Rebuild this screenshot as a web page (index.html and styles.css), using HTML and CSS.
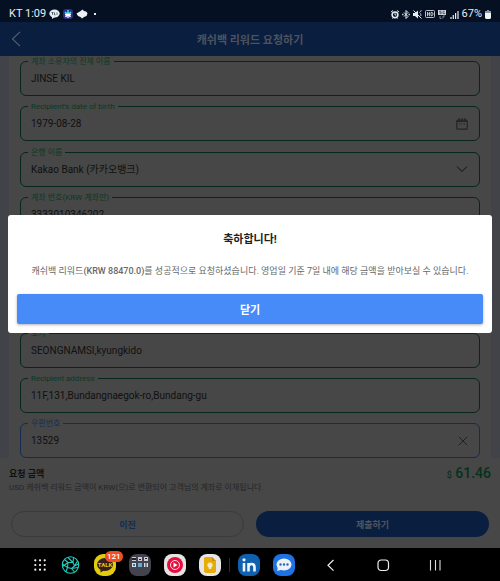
FILE: index.html
```html
<!DOCTYPE html>
<html lang="ko">
<head>
    <meta charset="UTF-8">
    <meta name="viewport" content="width=device-width, initial-scale=1.0">
    <title>캐쉬백 리워드 요청하기</title>
    <link rel="stylesheet" href="styles.css">
</head>
<body>
    <div class="screen">
        <div class="status-bar">
            <div class="status-left">
                <span>KT 1:09</span>
                <svg width="11" height="10" viewBox="0 0 11 10"><ellipse cx="5.5" cy="4.5" rx="5.2" ry="4" fill="#e8edf2"/><path d="M3 7v3l3-2z" fill="#e8edf2"/><path d="M2.5 3.5h2M3.5 3.5v2.3M5.5 3.5v2.3h1M8 3.5v2.3" stroke="#344052" stroke-width=".8" fill="none"/></svg>
                <svg width="10" height="10" viewBox="0 0 10 10"><rect width="10" height="10" rx="3" fill="#2c2e86"/><path d="M5 1v4M1.8 3.2L5 5l3.200-1.800" stroke="#48c9dc" stroke-width="1.6" fill="none"/><path d="M5 5v4M5 5L2.500 8M5 5l2.500 3M2 5.500h6" stroke="#fff" stroke-width="1.3"/></svg>
                <svg width="12" height="10" viewBox="0 0 12 10"><path d="M.5 4.500L3 3l1-.5L6.500.5 8 2c2 0 3 1 3.500 2.500L10.500 7 8 8 6 9.500 4.500 8 2 7z" fill="#eef2f5"/></svg>
                <span class="dot"></span>
            </div>
            <div class="status-right">
                <svg width="8" height="9" viewBox="0 0 8 9"><circle cx="4" cy="4.800" r="2.900" fill="none" stroke="#e8edf2" stroke-width="1.500"/><path d="M0 2l2-1.500M8 2L6 .5M1.500 8.500l1-1M6.500 8.500l-1-1M4 3.200V5h1.300" stroke="#e8edf2" fill="none"/></svg>
                <svg width="8" height="9" viewBox="0 0 8 9"><path d="M2 2.500l4 4-2 2v-8l2 2-4 4" stroke="#e8edf2" fill="none"/><path d="M.2 4.500h1.300M6.500 4.500h1.300" stroke="#e8edf2" stroke-width="1.300"/></svg>
                <svg width="9" height="9" viewBox="0 0 9 9"><path d="M0 3h2l3-2.500v8L2 6H0z" fill="#e8edf2"/><path d="M.5.5l8 8M6.500 2.500l1 1M7 5h1.500M7 1.500l1.500-.8" stroke="#e8edf2"/></svg>
                <svg width="10" height="9" viewBox="0 0 10 9"><rect x=".5" y=".5" width="9" height="7" rx="1" fill="none" stroke="#b8c0c9"/><path d="M2.500 2v4.200M4.400 2v4.200M2.500 4h2M6 2.400v3.300h1l.9-.8V3L7 2.400z" stroke="#e8edf2" stroke-width=".8" fill="none"/></svg>
                <svg width="9" height="9" viewBox="0 0 9 9"><rect width="8" height="5" fill="#d5dbe1"/><path d="M3.500 1H1.700v1.200h1.500v1.500H1.500M6.800 1.200H5v2.500h1.800V2.600" stroke="#26334a" stroke-width=".7" fill="none"/><path d="M2 6v2.500h1.500M5 8.500V6h2" stroke="#7f8997" fill="none"/></svg>
                <svg width="9" height="9" viewBox="0 0 9 9"><path d="M1 9V7M3.300 9V5M5.600 9V3M8 9V1" stroke="#e8edf2" stroke-width="1.200"/></svg>
                <span class="percent">67%</span>
                <svg width="6" height="9" viewBox="0 0 6 9"><path d="M0 1h2V0h2v1h2v2H0z" fill="#8c96a3"/><path d="M0 3h6v5L5 9H1L0 8z" fill="#f1f4f6"/></svg>
            </div>
        </div>

        <header class="header">
            <button class="back-btn" aria-label="뒤로">
                <svg width="10" height="16" viewBox="0 0 10 16"><path d="M9 .8L1.500 8 9 15.200" fill="none" stroke="#56606f" stroke-width="1.100"/></svg>
            </button>
            <h1>캐쉬백 리워드 요청하기</h1>
        </header>

        <main class="form-area">
            <form class="form-panel" id="cashback">
                <div class="field">
                    <label for="holder">계좌 소유자의 전체 이름</label>
                    <input type="text" id="holder" value="JINSE KIL">
                </div>
                <div class="field">
                    <label for="birth">Recipient's date of birth</label>
                    <input type="text" id="birth" value="1979-08-28">
                    <button type="button" class="field-icon" aria-label="날짜 선택">
                        <svg width="12" height="12" viewBox="0 0 12 12"><rect x=".8" y="2.200" width="10.400" height="9" rx="1" fill="none" stroke="#252529" stroke-width="1.200"/><path d="M1 3.500h10M3 0v3M6 0v3M9 0v3" stroke="#252529" stroke-width="1.200"/><path d="M3 6h1.200M5.400 6h1.200M7.800 6H9" stroke="#252529"/></svg>
                    </button>
                </div>
                <div class="field">
                    <label for="bank">은행 이름</label>
                    <select id="bank"><option>Kakao Bank (카카오뱅크)</option></select>
                    <svg class="field-icon arrow" width="12" height="12" viewBox="0 0 12 12"><path d="M1 3.500l5 5 5-5" fill="none" stroke="#101010"/></svg>
                </div>
                <div class="field">
                    <label for="account">계좌 번호(KRW 계좌만)</label>
                    <input type="text" id="account" value="3333010346202">
                </div>
                <div class="field"><input type="text" id="extra1"></div>
                <div class="field"><input type="text" id="extra2"></div>
                <div class="field">
                    <label for="city">도시</label>
                    <input type="text" id="city" value="SEONGNAMSI,kyungkido">
                </div>
                <div class="field">
                    <label for="address">Recipient address</label>
                    <input type="text" id="address" value="11F,131,Bundangnaegok-ro,Bundang-gu">
                </div>
                <div class="field active">
                    <label for="zip">우편번호</label>
                    <input type="text" id="zip" value="13529">
                    <button type="button" class="field-icon" aria-label="지우기">
                        <svg width="10" height="10" viewBox="0 0 10 10"><path d="M.8.8l8.400 8.400M9.200.8L.8 9.200" stroke="#1c1c1c" stroke-width=".9"/></svg>
                    </button>
                </div>
            </form>
        </main>

        <footer class="summary">
            <div class="summary-row">
                <h2>요청 금액</h2>
                <div class="amount"><small>$</small> 61.46</div>
            </div>
            <p>USD 캐쉬백 리워드 금액이 KRW(으)로 변환되어 고객님의 계좌로 이체됩니다.</p>
            <div class="actions">
                <button type="button" class="prev">이전</button>
                <button type="submit" form="cashback" class="submit">제출하기</button>
            </div>
        </footer>

        <!-- 완료 팝업 -->
        <div class="modal">
            <div class="modal-content" role="dialog" aria-labelledby="modal-title">
                <h2 id="modal-title">축하합니다!</h2>
                <p>캐쉬백 리워드<b>(KRW 88470.0)</b>를 성공적으로 요청하셨습니다. 영업일 기준 7일 내에 해당 금액을 받아보실 수 있습니다.</p>
                <button type="button" class="close">닫기</button>
            </div>
        </div>
    </div>

    <nav class="taskbar">
        <div class="apps">
            <button class="grid-btn" aria-label="앱스">
                <svg width="12" height="12" viewBox="0 0 12 12"><path d="M1.300 1.300h.01M6 1.300h.01M10.700 1.300h.01M1.300 6h.01M6 6h.01M10.700 6h.01M1.300 10.700h.01M6 10.700h.01M10.700 10.700h.01" stroke="#f5f5f5" stroke-width="2.200" stroke-linecap="round"/></svg>
            </button>
            <button aria-label="브라우저">
                <svg width="22" height="22" viewBox="0 0 22 22" fill="none" stroke="#20cfc0" stroke-width="1.100"><circle cx="11.500" cy="11" r="8.200"/><path d="M9 8.500h5l1.500 3.500-3 2.500-4-1zM9 8.500L5.500 5.500M14 8.500l.5-5M15.500 12l4-2M12.500 14.500l3 3.500M8.500 13.500L7 17.800M9 8.500l-5.500 4M8.500 13.500L3.500 10M14 8.500L9 3.500M15.500 12l3-5M12.500 14.500l6.500-1"/></svg>
            </button>
            <button class="kakao" aria-label="카카오톡">
                <svg width="22" height="22" viewBox="0 0 22 22"><rect width="22" height="22" rx="9" fill="#e2cc0c"/><ellipse cx="11" cy="10.500" rx="8" ry="6.500" fill="#35201d"/><path d="M6.500 14v4.500l5-3z" fill="#35201d"/><text x="11" y="13" text-anchor="middle" font-size="6" font-weight="700" fill="#e2cc0c">TALK</text></svg>
                <span class="badge">121</span>
            </button>
            <button aria-label="폴더">
                <svg width="22" height="22" viewBox="0 0 22 22"><rect width="22" height="22" rx="8" fill="#43434d"/><path d="M3 3h4v4H3zM9 3h4v4H9zM15 3h4v4h-4z" fill="#c9ced4"/><path d="M3 4h4v2H3zM10 5h2v1h-2zM16 4h2v1h-2z" fill="#222"/><path d="M3 9h4v4H3zM15 9h4v4h-4z" fill="#d7dde3"/><path d="M4 10h2v2H4z" fill="#2779b8"/><path d="M9 9h4v4H9z" fill="#65a9dc"/><path d="M17 9v4" stroke="#333"/></svg>
            </button>
            <button aria-label="음악">
                <svg width="22" height="22" viewBox="0 0 22 22"><rect width="22" height="22" rx="8" fill="#e4e4e4"/><circle cx="11" cy="11" r="8" fill="#e90b3d"/><circle cx="11" cy="11" r="4.500" fill="none" stroke="#f5dce1"/><path d="M9.500 8.500v5l4-2.500z" fill="#fff"/></svg>
            </button>
            <button aria-label="메모">
                <svg width="22" height="22" viewBox="0 0 22 22"><rect width="22" height="22" rx="8" fill="#e6e6e6"/><path d="M6 3h7l4 4v10.500L15.500 19h-9L5 17.500V4z" fill="#e8ac08"/><path d="M13 3v4h4z" fill="#c98e05"/><circle cx="11" cy="11" r="2.600" fill="#f4ead0"/><path d="M9.800 13h2.400v2H9.800z" fill="#f4ead0"/></svg>
            </button>
            <span class="divider"></span>
            <button aria-label="링크드인">
                <svg width="22" height="22" viewBox="0 0 22 22"><rect width="22" height="22" rx="8" fill="#1060b0"/><path d="M6 9v8.500M10.500 9v8.500M10.500 13c0-4 6-4 6 0v4.500" fill="none" stroke="#f2f5f8" stroke-width="2.600"/><circle cx="6" cy="5.800" r="1.600" fill="#f2f5f8"/></svg>
            </button>
            <button aria-label="메시지">
                <svg width="22" height="22" viewBox="0 0 22 22"><rect width="22" height="22" rx="8" fill="#1e72e4"/><ellipse cx="11" cy="10.500" rx="7.500" ry="6" fill="#eef1f5"/><path d="M5 12l-.8 5 5-1.500z" fill="#eef1f5"/><path d="M7.500 10.500h.01M11 10.500h.01M14.500 10.500h.01" stroke="#2368bb" stroke-width="2.400" stroke-linecap="round"/></svg>
            </button>
        </div>
        <div class="system">
            <button aria-label="뒤로"><svg width="22" height="22" viewBox="0 0 22 22"><path d="M13.500 6L8 11.300l5.500 5.300" fill="none" stroke="#eee" stroke-width="1.200"/></svg></button>
            <button aria-label="홈"><svg width="22" height="22" viewBox="0 0 22 22"><rect x="6" y="6" width="10.500" height="10.500" rx="3.200" fill="none" stroke="#eee" stroke-width="1.200"/></svg></button>
            <button aria-label="최근 앱"><svg width="22" height="22" viewBox="0 0 22 22"><path d="M6.500 6v10.500M11.500 6v10.500M16 6v10.500" stroke="#ddd" stroke-width="1.100"/></svg></button>
        </div>
    </nav>
</body>
</html>
```
FILE: styles.css
```css
:root {
    --panel: #474747;
    --side: #424348;
    --navy: #0a1e3f;
    --green: #06271a;
    --primary: #478bf8;
}

* {
    box-sizing: border-box;
    margin: 0;
    padding: 0;
    font-family: Roboto, "Noto Sans CJK KR", sans-serif;
}

body {
    min-height: 100vh;
    display: flex;
    flex-direction: column;
    background: #000;
}

button {
    border: none;
    background: none;
    cursor: pointer;
}

svg {
    display: block;
}

.screen {
    flex: 1;
    display: flex;
    flex-direction: column;
    position: relative;
    background: var(--panel);
}

/* 상태 표시줄 */
.status-bar {
    height: 22px;
    padding: 6px 9px 0;
    display: flex;
    justify-content: space-between;
    background: #051023;
    color: #e8edf2;
    font-size: 11px;
    line-height: 16px;
}

.status-left,
.status-right {
    display: flex;
    align-items: center;
    gap: 3px;
}

.dot {
    width: 2px;
    height: 2px;
    margin-left: 3px;
    background: #e8edf2;
}

.header {
    height: 34px;
    display: grid;
    grid-template-columns: 34px 1fr 34px;
    align-items: center;
    background: var(--navy);
}

.back-btn {
    padding-left: 11px;
}

.header h1 {
    color: #4d535d;
    font-size: 11px;
    font-weight: 700;
    text-align: center;
}

/* 입력 폼 */
.form-area {
    flex: 1;
    display: flex;
    padding: 0 9px;
    overflow: hidden;
    background: var(--side);
}

.form-panel {
    flex: 1;
    display: flex;
    flex-direction: column;
    justify-content: space-between;
    padding: 5px 11px 0;
    background: var(--panel);
}

.field {
    position: relative;
    height: 35px;
    display: flex;
    align-items: center;
    padding: 0 11px 0 10px;
    border: 1px solid var(--green);
    border-radius: 6px;
}

.field label {
    position: absolute;
    left: 7px;
    top: -6px;
    padding: 0 3px;
    background: var(--panel);
    color: #0b3922;
    font-size: 8px;
    line-height: 12px;
}

.field input,
.field select {
    flex: 1;
    min-width: 0;
    height: 20px;
    border: none;
    outline: none;
    appearance: none;
    background: transparent;
    color: #101010;
    font-size: 10px;
}

.field-icon {
    flex: none;
}

.field .arrow {
    pointer-events: none;
}

.field.active {
    border-color: #152b50;
}

.field.active label {
    color: #142e5b;
}

/* 하단 금액 영역 */
.summary {
    padding: 6px 9px 11px;
    background: var(--panel);
}

.summary-row {
    display: flex;
    justify-content: space-between;
    align-items: center;
    height: 18px;
}

.summary h2 {
    color: #101010;
    font-size: 9px;
    font-weight: 700;
}

.amount {
    color: #06311d;
    font-size: 14px;
    font-weight: 500;
}

.amount small {
    font-size: 9px;
}

.summary p {
    color: #24262a;
    font-size: 8px;
    line-height: 12px;
}

.actions {
    display: grid;
    grid-template-columns: 1fr 1fr;
    gap: 12px;
    margin-top: 17px;
    padding: 0 2px;
}

.actions button {
    height: 26px;
    border-radius: 13px;
    font-size: 9px;
    font-weight: 700;
}

.actions .prev {
    border: 1px solid #393a3c;
    color: #122c58;
}

.actions .submit {
    background: var(--navy);
    color: #50565f;
}

/* 팝업 */
.modal {
    position: absolute;
    inset: 0;
    display: flex;
    justify-content: center;
    align-items: center;
    padding: 0 8px;
}

.modal-content {
    width: 100%;
    padding: 16px 9px 9px;
    border-radius: 3px;
    background: #fff;
    text-align: center;
}

.modal-content h2 {
    color: #222;
    font-size: 11px;
    font-weight: 700;
    line-height: 17px;
}

.modal-content p {
    margin: 15px 0;
    color: #686868;
    font-size: 9px;
    line-height: 16px;
}

.modal-content b {
    font-weight: 500;
}

.close {
    display: block;
    width: 100%;
    height: 30px;
    border-radius: 2px;
    background: var(--primary);
    box-shadow: 0 1px 3px rgba(0, 0, 0, 0.3);
    color: #fff;
    font-size: 11px;
    font-weight: 700;
}

/* 작업 표시줄 */
.taskbar {
    height: 33px;
    display: flex;
    justify-content: space-between;
    align-items: center;
    padding: 0 54px 0 34px;
    background: #000;
}

.apps,
.system {
    display: flex;
    align-items: center;
    gap: 13px;
}

.system {
    gap: 30px;
}

.divider {
    width: 1px;
    height: 14px;
    margin: 0 -5px;
    background: #2d2d2d;
}

.kakao {
    position: relative;
}

.badge {
    position: absolute;
    left: 11px;
    top: -3px;
    padding: 0 2px;
    border-radius: 6px;
    background: #f04f23;
    color: #fff;
    font-size: 8px;
    font-weight: 500;
    line-height: 11px;
}
```
